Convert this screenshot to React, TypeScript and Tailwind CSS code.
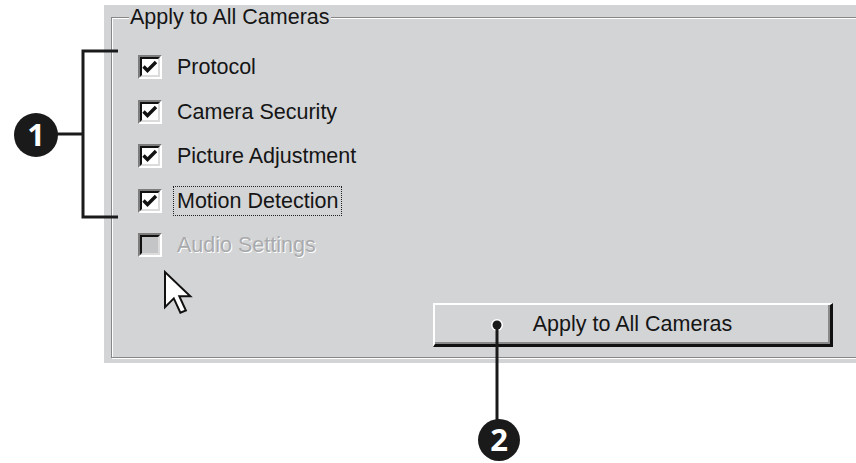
import { type ReactNode } from "react";

const PANEL = "#d3d4d6";

function CheckBox({ checked, disabled }: { checked?: boolean; disabled?: boolean }) {
  return (
    <div className="w-[24px] h-[24px] shrink-0 border-t-2 border-l-2 border-b-2 border-r-2 border-t-[#7d7d7d] border-l-[#7d7d7d] border-b-white border-r-white">
      <div
        className={
          "w-full h-full border-t-2 border-l-2 border-b-2 border-r-2 border-t-[#111] border-l-[#111] border-b-[#dcdcdc] border-r-[#dcdcdc] flex items-center justify-center " +
          (disabled ? "bg-[#c4c5c7]" : "bg-white")
        }
      >
        {checked && (
          <svg width="16" height="16" viewBox="0 0 16 16">
            <path d="M1.5 7.5 L5.5 11.5 L14 3" fill="none" stroke="#111" strokeWidth="3.4" />
          </svg>
        )}
      </div>
    </div>
  );
}

function Row({ label, checked, disabled, focused }: { label: string; checked?: boolean; disabled?: boolean; focused?: boolean }) {
  let text: ReactNode = label;
  return (
    <div className="h-[44.5px] flex items-center gap-[11px]">
      <CheckBox checked={checked} disabled={disabled} />
      <span
        className={
          "px-[3px] text-[21.5px] leading-[28px] " +
          (focused ? "border border-dotted border-[#222] " : "border border-transparent ") +
          (disabled ? "text-[#a9aaac] [text-shadow:1px_1px_0_#fff]" : "text-[#151515]")
        }
      >
        {text}
      </span>
    </div>
  );
}

export default function App() {
  return (
    <div className="relative w-[856px] h-[463px] bg-white overflow-hidden pt-[5px] font-[family-name:'Liberation_Sans',Arial,sans-serif]">
      {/* dialog panel */}
      <div className="ml-[104px] h-[358px] pt-[12px] pl-[7px]" style={{ backgroundColor: PANEL }}>
        {/* group box, etched border */}
        <div className="relative h-[341px] -mr-[20px] border border-[#878787] shadow-[inset_1px_1px_0_#fff,1px_1px_0_#fff] pl-[26px] pt-[27px]">
          <div className="absolute left-[17px] -top-[13px] px-[1px] bg-[#d3d4d6] text-[21.5px] leading-[24px] text-[#151515]">
            Apply to All Cameras
          </div>
          <Row label="Protocol" checked />
          <Row label="Camera Security" checked />
          <Row label="Picture Adjustment" checked />
          <Row label="Motion Detection" checked focused />
          <Row label="Audio Settings" disabled />

          <button className="mt-[35px] ml-[295px] w-[400px] h-[44px] border-t-2 border-l-2 border-b-[3px] border-r-[3px] border-t-white border-l-white border-b-[#111] border-r-[#111] shadow-[inset_-2px_-2px_0_#8a8a8a] bg-[#d3d4d6] text-[21.5px] text-[#151515] flex items-center justify-center font-[family-name:'Liberation_Sans',Arial,sans-serif]">
            Apply to All Cameras
          </button>
        </div>
      </div>

      {/* callouts and pointer */}
      <svg className="absolute inset-0 pointer-events-none" width="856" height="463" viewBox="0 0 856 463">
        {/* bracket 1 */}
        <path d="M118 51 H83 V217 H118" fill="none" stroke="#1a1a1a" strokeWidth="3" />
        <path d="M56 134 H83" stroke="#1a1a1a" strokeWidth="3" />
        <circle cx="36" cy="135" r="22" fill="#1a1a1a" />
        <text x="36" y="146" textAnchor="middle" fill="#fff" fontSize="31" fontWeight="700" fontFamily="'Open Sans', 'Liberation Sans', sans-serif">1</text>

        {/* callout 2 */}
        <circle cx="497" cy="325" r="6" fill="#fff" />
        <path d="M497 325 V420" stroke="#1a1a1a" strokeWidth="3" />
        <circle cx="497" cy="325" r="4.5" fill="#1a1a1a" />
        <circle cx="499" cy="440" r="21" fill="#1a1a1a" />
        <text x="499" y="451" textAnchor="middle" fill="#fff" fontSize="31" fontWeight="700" fontFamily="'Open Sans', 'Liberation Sans', sans-serif">2</text>

        {/* mouse pointer */}
        <g transform="translate(165 272) scale(2.2)">
          <path d="M0 0 V16 L4 12 L7 18.5 L9.5 17.5 L6.5 11 H11.5 Z" fill="#fff" stroke="#111" strokeWidth="0.9" strokeLinejoin="miter" />
        </g>
      </svg>
    </div>
  );
}
